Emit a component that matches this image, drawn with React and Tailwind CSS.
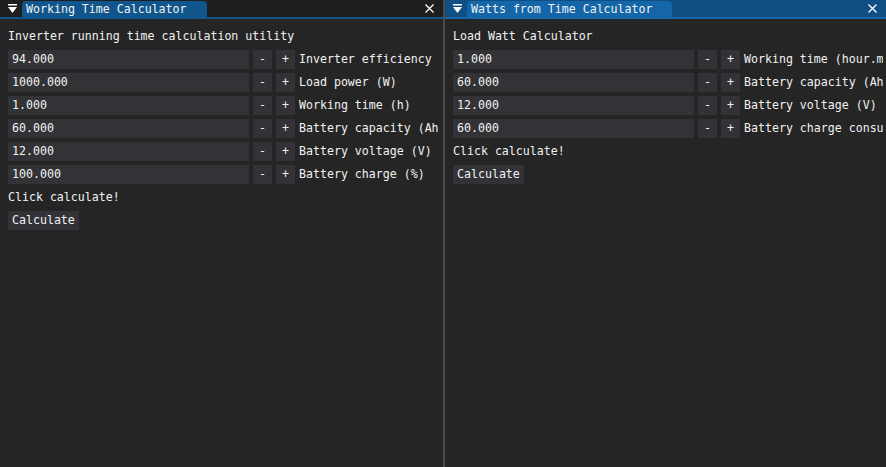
import React from 'react';

const leftFields = [
  { value: '94.000', label: 'Inverter efficiency' },
  { value: '1000.000', label: 'Load power (W)' },
  { value: '1.000', label: 'Working time (h)' },
  { value: '60.000', label: 'Battery capacity (Ah)' },
  { value: '12.000', label: 'Battery voltage (V)' },
  { value: '100.000', label: 'Battery charge (%)' },
];

const rightFields = [
  { value: '1.000', label: 'Working time (hour.min)' },
  { value: '60.000', label: 'Battery capacity (Ah)' },
  { value: '12.000', label: 'Battery voltage (V)' },
  { value: '60.000', label: 'Battery charge consumed (%)' },
];

const MenuArrow = () => (
  <svg width="9" height="9" viewBox="0 0 9 9" className="shrink-0">
    <rect x="0" y="0" width="9" height="1.5" fill="#ffffff" />
    <polygon points="0,3 9,3 4.5,9" fill="#ffffff" />
  </svg>
);

const CloseX = () => (
  <svg width="9" height="9" viewBox="0 0 9 9" className="shrink-0">
    <path d="M0.5 0.5 L8.5 8.5 M8.5 0.5 L0.5 8.5" stroke="#ffffff" strokeWidth="1.3" />
  </svg>
);

const FieldRow = ({ value, label }) => (
  <div className="flex h-[19px] items-center gap-[4px] whitespace-nowrap">
    <div className="flex h-full w-[241px] shrink-0 items-center bg-[#333337] px-[4px]">{value}</div>
    <button className="flex h-[19px] w-[19px] shrink-0 items-center justify-center bg-[#333337]">-</button>
    <button className="flex h-[19px] w-[19px] shrink-0 items-center justify-center bg-[#333337]">+</button>
    <span>{label}</span>
  </div>
);

const Pane = ({ title, focused, heading, fields, width, clip }) => (
  <div className={`flex h-full shrink-0 flex-col ${width}`}>
    <div className={`flex h-[17px] items-end ${focused ? 'bg-[#0f4f84]' : 'bg-[#1e1e1e]'}`}>
      <div className="flex h-full w-[22px] items-center justify-center pb-[1px] pl-[2px]">
        <MenuArrow />
      </div>
      <div
        className={`flex h-[16px] items-center whitespace-nowrap rounded-t-[4px] pl-[4px] pr-[20px] ${
          focused ? 'bg-[#1466a8]' : 'bg-[#10568c]'
        }`}
      >
        {title}
      </div>
      <div className="flex-1" />
      <div className="flex h-full w-[24px] items-center justify-center pr-[4px]">
        <CloseX />
      </div>
    </div>
    <div className={`h-[2px] ${focused ? 'bg-[#1466a8]' : 'bg-[#10568c]'}`} />
    <div className={`ml-[8px] mt-[8px] flex flex-col gap-[4px] overflow-hidden ${clip}`}>
      <div className="flex h-[19px] items-center whitespace-nowrap">{heading}</div>
      {fields.map((f) => (
        <FieldRow key={f.label} value={f.value} label={f.label} />
      ))}
      <div className="flex h-[19px] items-center">Click calculate!</div>
      <div>
        <button className="h-[19px] bg-[#333337] px-[4px]">Calculate</button>
      </div>
    </div>
  </div>
);

export default function App() {
  return (
    <div className="flex h-[467px] w-[886px] overflow-hidden bg-[#252525] font-['DejaVu_Sans_Mono',monospace] text-[11.6px] leading-[13px] text-[#f2f2f2]">
      <Pane
        title="Working Time Calculator"
        heading="Inverter running time calculation utility"
        fields={leftFields}
        width="w-[443px]"
        clip="mr-[5px]"
      />
      <div className="h-full w-[2px] shrink-0 bg-[#4a4a4a]" />
      <Pane
        title="Watts from Time Calculator"
        heading="Load Watt Calculator"
        fields={rightFields}
        focused
        width="w-[441px]"
        clip="mr-[3px]"
      />
    </div>
  );
}
